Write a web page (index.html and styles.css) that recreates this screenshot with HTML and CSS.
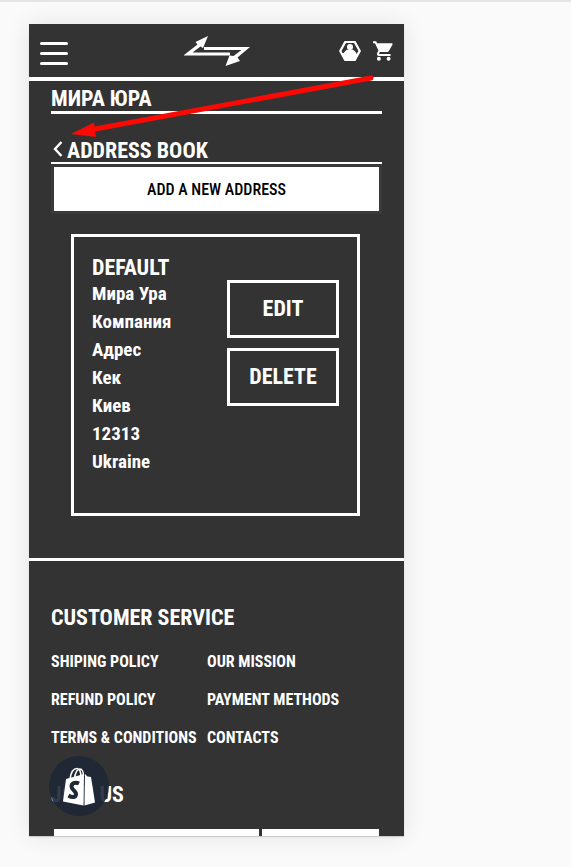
FILE: index.html
```html
<!DOCTYPE html>
<html lang="en">
<head>
  <meta charset="UTF-8" />
  <meta name="viewport" content="width=device-width, initial-scale=1.0"/>
  <title>Address Book</title>
  <link rel="stylesheet" href="styles.css">
</head>
<body>

  <div class="phone">

    <!-- Header -->
    <header class="header">
      <button type="button" class="menu-button" aria-label="Menu">
        <span></span>
        <span></span>
        <span></span>
      </button>
      <a href="#" class="logo" aria-label="Home">
        <svg width="66" height="32" viewBox="0 0 66 32">
          <path d="M0 20L13.500 9.500L11.500 7L24 1L19 13L16.500 11.500L8.500 17.500H46V20.500H0Z" fill="#fff"/>
          <path d="M66 12L53.500 22.500L56 26L41.500 31L45.500 20.500L49.500 21L57.500 15H20V12Z" fill="#fff"/>
        </svg>
      </a>
      <nav class="header-icons">
        <a href="#" aria-label="Account">
          <svg width="22" height="22" viewBox="0 0 22 22">
            <path d="M5.500 1H16.500L22 11L16.500 21H5.500L0 11Z" fill="#fff"/>
            <path d="M7 3H15L19.500 11L17.500 14L3.500 13L2.500 11Z" fill="#333"/>
            <circle cx="11" cy="7" r="3" fill="#fff"/>
            <path d="M4 15Q6 9.500 9.500 9.500H12.500Q16 9.500 18 15L15 20H7Z" fill="#fff"/>
          </svg>
        </a>
        <a href="#" aria-label="Cart">
          <svg width="20" height="22" viewBox="1 1 20.500 22">
            <path d="M7 18c-1.100 0-1.990.9-1.990 2S5.900 22 7 22s2-.9 2-2-.9-2-2-2zM1 2v2h2l3.600 7.590-1.350 2.450c-.16.280-.25.610-.25.960 0 1.100.9 2 2 2h12v-2H7.420c-.14 0-.25-.11-.25-.25l.03-.12.900-1.630h7.450c.75 0 1.410-.41 1.750-1.030l3.580-6.490A1 1 0 0 0 20 4H5.210l-.94-2H1zm16 16c-1.100 0-1.990.9-1.990 2s.89 2 1.990 2 2-.9 2-2-.9-2-2-2z" fill="#fff"/>
          </svg>
        </a>
      </nav>
    </header>

    <!-- Address book -->
    <main class="account">
      <h1 class="account-name">МИРА ЮРА</h1>
      <h2 class="page-title">
        <a href="#" aria-label="Back">
          <svg width="10" height="20" viewBox="0 0 10 20">
            <path d="M8.500 1L2 8L8.500 15" fill="none" stroke="#fff" stroke-width="2.400"/>
          </svg>
        </a>
        ADDRESS BOOK
      </h2>
      <button type="button" class="add-button">ADD A NEW ADDRESS</button>

      <section class="address-card">
        <div class="address">
          <h3>DEFAULT</h3>
          <p>Мира Ура</p>
          <p>Компания</p>
          <p>Адрес</p>
          <p>Кек</p>
          <p>Киев</p>
          <p>12313</p>
          <p>Ukraine</p>
        </div>
        <div class="address-actions">
          <button type="button">EDIT</button>
          <button type="button">DELETE</button>
        </div>
      </section>
    </main>

    <!-- Footer -->
    <footer class="footer">
      <h2>CUSTOMER SERVICE</h2>
      <nav class="footer-links">
        <a href="#">SHIPING POLICY</a>
        <a href="#">OUR MISSION</a>
        <a href="#">REFUND POLICY</a>
        <a href="#">PAYMENT METHODS</a>
        <a href="#">TERMS &amp; CONDITIONS</a>
        <a href="#">CONTACTS</a>
      </nav>
      <h2 class="join-title">JOIN US</h2>
      <form class="join-form">
        <input type="email" aria-label="Email" />
        <button type="submit" aria-label="Subscribe"></button>
      </form>
    </footer>

    <!-- Shopify badge -->
    <a href="#" class="shopify-badge" aria-label="Shopify">
      <svg width="34" height="40" viewBox="0 0 34 40">
        <path d="M8 13C9 6 12 2.500 15 2.500S19 6 19 12M12.500 12C13.500 6 16 3 18 3S21.500 6 21.500 10" fill="none" stroke="#fff" stroke-width="1.600"/>
        <path d="M4 13L22 8L21.500 39.500L1 35.500Z" fill="#fff"/>
        <path d="M23 8L25.500 10.500L29 11L33 36.500L22.500 39.500Z" fill="#fff"/>
        <path d="M17 17.500C13 15.500 9.500 17.500 9.500 20.500C9.500 24.500 14.500 24.500 14 28.500C13.500 32 9.500 31.500 6.500 29.500" fill="none" stroke="#1f2935" stroke-width="4"/>
      </svg>
    </a>

    <!-- Pointer to the back link -->
    <svg class="pointer" width="310" height="66" viewBox="0 0 310 66">
      <path d="M301 6L25 57" stroke="#fb0a05" stroke-width="5" stroke-linecap="round"/>
      <path d="M1 62L24 50.500L26 65Z" fill="#fb0a05"/>
    </svg>

  </div>

</body>
</html>
```

FILE: styles.css
```css
* {
  box-sizing: border-box;
}

body {
  margin: 0;
  padding: 22px 28px 31px 29px;
  height: 100vh;
  background: #fafafa;
  border-top: 2px solid #e5e5e5;
  font-family: 'Roboto Condensed', 'Arial Narrow', 'Liberation Sans', sans-serif;
  font-weight: bold;
  color: #fff;
  overflow: hidden;
}

h1, h2, h3, p {
  margin: 0;
}

a {
  color: #fff;
  text-decoration: none;
}

button, input {
  font-family: inherit;
  font-weight: bold;
  border-radius: 0;
  cursor: pointer;
}

svg {
  display: block;
}

.phone {
  position: relative;
  max-width: 375px;
  height: 100%;
  background: #333;
  box-shadow: 0 0 24px rgba(0, 0, 0, 0.09), 0 1px 1px rgba(0, 0, 0, 0.15);
  overflow: hidden;
}

/* Header */
.header {
  display: grid;
  grid-template-columns: 1fr auto 1fr;
  align-items: center;
  height: 57px;
  padding: 0 11px;
  border-bottom: 4px solid #fff;
}

.menu-button {
  display: flex;
  flex-direction: column;
  gap: 7px;
  width: 28px;
  padding: 6px 0 0;
  background: none;
  border: none;
}

.menu-button span {
  width: 28px;
  height: 3px;
  border-radius: 2px;
  background: #fff;
}

.header-icons {
  display: flex;
  justify-content: flex-end;
  gap: 12px;
}

/* Address book */
.account {
  padding: 6px 22px 42px;
}

.account-name {
  font-size: 22px;
  line-height: 24px;
  border-bottom: 3px solid #fff;
}

.page-title {
  display: flex;
  align-items: center;
  gap: 4px;
  padding: 25px 0 0 2px;
  font-size: 22px;
  line-height: 23px;
  border-bottom: 2px solid #fff;
}

.add-button {
  width: 100%;
  height: 50px;
  background: #fff;
  border: 3px solid #3a3a3a;
  color: #000;
  font-size: 16px;
  font-weight: 500;
}

.address-card {
  display: flex;
  justify-content: space-between;
  margin: 20px 22px 0 20px;
  padding: 18px 18px 37px;
  border: 3px solid #fff;
}

.address h3 {
  font-size: 22px;
  line-height: 25px;
}

.address p {
  font-size: 19px;
  line-height: 28px;
}

.address-actions {
  display: flex;
  flex-direction: column;
  gap: 10px;
  padding-top: 25px;
}

.address-actions button {
  width: 112px;
  height: 58px;
  padding: 0 0 2px;
  background: none;
  border: 3px solid #fff;
  color: #fff;
  font-size: 22px;
}

/* Footer */
.footer {
  padding: 43px 22px 0;
  border-top: 3px solid #fff;
}

.footer h2 {
  font-size: 22px;
  line-height: 28px;
}

.footer-links {
  display: grid;
  grid-template-columns: 156px 1fr;
  row-gap: 18px;
  padding-top: 20px;
  font-size: 16px;
  line-height: 20px;
  white-space: nowrap;
}

.footer .join-title {
  padding-top: 33px;
}

.join-form {
  display: flex;
  gap: 3px;
  padding: 20px 3px 0;
}

.join-form input {
  flex: 1;
  min-width: 0;
  height: 44px;
  padding: 0 12px;
  border: none;
  background: #fff;
}

.join-form button {
  width: 117px;
  height: 44px;
  border: none;
  background: #fff;
}

.shopify-badge {
  position: absolute;
  left: 20px;
  bottom: 20px;
  display: flex;
  align-items: center;
  justify-content: center;
  width: 60px;
  height: 60px;
  border-radius: 50%;
  background: rgba(29, 39, 52, 0.9);
}

.pointer {
  position: absolute;
  left: 41px;
  top: 48px;
  pointer-events: none;
}
```
